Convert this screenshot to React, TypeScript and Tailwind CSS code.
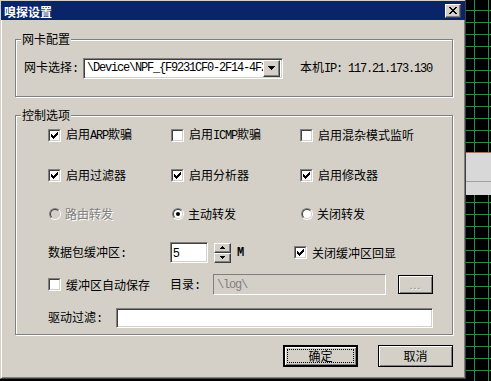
import React from 'react';

const mono = "font-['Liberation_Mono',monospace] text-[12px] tracking-[-1.2px]";
const sunken =
  'border border-t-[#808080] border-l-[#808080] border-b-white border-r-white shadow-[inset_1px_1px_0_#404040,inset_-1px_-1px_0_#d4d0c8]';
const raised =
  'border border-t-white border-l-white border-b-[#404040] border-r-[#404040] shadow-[inset_-1px_-1px_0_#808080]';

function A({ children }: { children: React.ReactNode }) {
  return <span className={mono}>{children}</span>;
}

function Tick() {
  return (
    <svg width="7" height="7" viewBox="0 0 7 7" className="block">
      <path d="M0 2h1v3H0zM1 3h1v3H1zM2 4h1v3H2zM3 3h1v3H3zM4 2h1v3H4zM5 1h1v3H5zM6 0h1v3H6z" fill="#000" />
    </svg>
  );
}

function CheckBox({ checked, label }: { checked?: boolean; label: React.ReactNode }) {
  return (
    <div className="flex items-center h-[20px]">
      <div className="w-[13px] h-[13px] flex-none border border-t-[#808080] border-l-[#808080] border-b-white border-r-white">
        <div className="w-full h-full border border-t-[#404040] border-l-[#404040] border-b-[#d4d0c8] border-r-[#d4d0c8] bg-white flex items-center justify-center">
          {checked && <Tick />}
        </div>
      </div>
      <span className="ml-[5px] whitespace-nowrap">{label}</span>
    </div>
  );
}

function Radio({ checked, disabled, label }: { checked?: boolean; disabled?: boolean; label: string }) {
  return (
    <div className="flex items-center h-[20px] pl-[1px]">
      <div className="w-[12px] h-[12px] flex-none rounded-full border border-t-[#808080] border-l-[#808080] border-b-white border-r-white">
        <div
          className={`w-full h-full rounded-full border border-t-[#404040] border-l-[#404040] border-b-[#d4d0c8] border-r-[#d4d0c8] flex items-center justify-center ${
            disabled ? 'bg-[#d4d0c8]' : 'bg-white'
          }`}
        >
          {checked && <div className="w-[4px] h-[4px] rounded-full bg-black" />}
        </div>
      </div>
      <span className={`ml-[4px] whitespace-nowrap ${disabled ? 'text-[#808080] [text-shadow:1px_1px_0_#fff]' : ''}`}>
        {label}
      </span>
    </div>
  );
}

function Group({ title, className, children }: { title: string; className?: string; children: React.ReactNode }) {
  return (
    <div className={`relative border border-[#808080] shadow-[inset_1px_1px_0_#fff,1px_1px_0_#fff] ${className ?? ''}`}>
      <span className="absolute -top-[8px] left-[5px] px-[1px] bg-[#d4d0c8] leading-[14px]">{title}</span>
      {children}
    </div>
  );
}

function Arrow({ up }: { up?: boolean }) {
  return (
    <svg width="7" height="4" viewBox="0 0 7 4" className="block">
      <path d={up ? 'M3 0h1v1h1v1h1v1h1v1H0V3h1V2h1V1h1z' : 'M0 0h7v1H6v1H5v1H4v1H3V3H2V2H1V1H0z'} fill="#000" />
    </svg>
  );
}

function SmallArrow({ up }: { up?: boolean }) {
  return (
    <svg width="5" height="3" viewBox="0 0 5 3" className="block">
      <path d={up ? 'M2 0h1v1h1v1h1v1H0V2h1V1h1z' : 'M0 0h5v1H4v1H3v1H2V2H1V1H0z'} fill="#000" />
    </svg>
  );
}

function Grid() {
  const h = [];
  for (let y = 10; y < 381; y += 12) h.push(<rect key={'h' + y} x="0" y={y} width="25" height="1" />);
  return (
    <svg className="absolute inset-0" width="25" height="381" viewBox="0 0 25 381">
      <g fill="#2f8a4c">
        {h}
        <rect x="8" y="0" width="1" height="381" />
        <rect x="22" y="0" width="1" height="381" />
      </g>
    </svg>
  );
}

export default function App() {
  return (
    <div className="w-[491px] h-[381px] bg-black flex overflow-hidden font-['Noto_Sans_CJK_SC',sans-serif] text-[12px] leading-[14px] text-black">
      <div className="w-[466px] h-[379px] flex-none flex flex-col bg-[#d4d0c8] border-l border-l-[#d4d0c8] border-r border-b border-r-[#404040] border-b-[#404040] shadow-[inset_1px_0_0_#fff,inset_-1px_-1px_0_#808080]">
        {/* title bar */}
        <div className="h-[20px] flex-none flex items-center justify-between bg-[#0a246a] pl-[3px] pr-[4px] border-t border-t-[#d4d0c8]">
          <span className="text-white font-bold text-[12px] leading-[14px] pt-[2px]">嗅探设置</span>
          <div className={`w-[16px] h-[14px] bg-[#d4d0c8] flex items-center justify-center ${raised}`}>
            <svg width="8" height="7" viewBox="0 0 8 7" className="block">
              <path d="M0 0h2v1h1v1h2V1h1V0h2v1H7v1H6v1H5v1h1v1h1v1h1v1H6V6H5V5H3v1H2v1H0V6h1V5h1V4h1V3H2V2H1V1H0z" fill="#000" />
            </svg>
          </div>
        </div>

        <div className="flex flex-col pl-[14px] pr-[12px]">
          <Group title="网卡配置" className="mt-[19px] h-[58px] flex items-center pl-[8px]">
            <span className="w-[59px] flex-none">
              网卡选择<A>:</A>
            </span>
            <div className={`w-[200px] h-[21px] flex-none flex items-center bg-white pl-[3px] pr-[2px] ${sunken}`}>
              <span className={`flex-1 overflow-hidden whitespace-nowrap ${mono}`}>
                \Device\NPF_{'{'}F9231CF0-2F14-4F2C
              </span>
              <div className={`w-[17px] h-[17px] flex-none bg-[#d4d0c8] flex items-center justify-center ${raised}`}>
                <Arrow />
              </div>
            </div>
            <span className="ml-[17px] whitespace-nowrap">
              本机<A>IP: 117.21.173.130</A>
            </span>
          </Group>

          <Group title="控制选项" className="mt-[18px] h-[220px] flex flex-col pl-[32px] pt-[9px]">
            <div className="grid grid-cols-[123px_129px_1fr]">
              <CheckBox checked label={<>启用<A>ARP</A>欺骗</>} />
              <CheckBox label={<>启用<A>ICMP</A>欺骗</>} />
              <CheckBox label="启用混杂模式监听" />
            </div>
            <div className="grid grid-cols-[123px_129px_1fr] mt-[20px]">
              <CheckBox checked label="启用过滤器" />
              <CheckBox checked label="启用分析器" />
              <CheckBox checked label="启用修改器" />
            </div>
            <div className="grid grid-cols-[123px_129px_1fr] mt-[19px]">
              <Radio disabled label="路由转发" />
              <Radio checked label="主动转发" />
              <Radio label="关闭转发" />
            </div>

            <div className="flex items-center h-[21px] mt-[18px]">
              <span className="w-[122px] flex-none">
                数据包缓冲区<A>:</A>
              </span>
              <div className={`w-[38px] h-[21px] flex-none bg-white flex items-center pl-[2px] font-['Liberation_Sans',sans-serif] text-[12px] ${sunken}`}>
                5
              </div>
              <div className="ml-[6px] w-[17px] h-[20px] flex-none flex flex-col">
                <div className={`h-[10px] bg-[#d4d0c8] flex items-center justify-center ${raised}`}>
                  <SmallArrow up />
                </div>
                <div className={`h-[10px] bg-[#d4d0c8] flex items-center justify-center ${raised}`}>
                  <SmallArrow />
                </div>
              </div>
              <span className={`ml-[6px] w-[57px] flex-none font-bold ${mono}`}>M</span>
              <CheckBox checked label="关闭缓冲区回显" />
            </div>

            <div className="flex items-center h-[21px] mt-[11px]">
              <div className="w-[122px] flex-none">
                <CheckBox label="缓冲区自动保存" />
              </div>
              <span className="w-[43px] flex-none">
                目录<A>:</A>
              </span>
              <div className={`w-[173px] h-[21px] flex-none flex items-center pl-[3px] text-[#808080] ${mono} ${sunken} shadow-none border-t-[#808080] border-l-[#808080]`}>
                \log\
              </div>
              <div className="ml-[12px] w-[35px] h-[19px] flex-none border border-black shadow-[inset_1px_1px_0_#fff,inset_-1px_-1px_0_#808080] flex items-center justify-center text-[#808080] [text-shadow:1px_1px_0_#fff] text-[10px] leading-[10px] tracking-[1px]">
                ...
              </div>
            </div>

            <div className="flex items-center h-[20px] mt-[13px]">
              <span className="w-[68px] flex-none">
                驱动过滤<A>:</A>
              </span>
              <div className={`w-[317px] h-[20px] flex-none bg-white ${sunken}`} />
            </div>
          </Group>

          <div className="flex justify-end gap-[20px] mt-[10px] pr-[0px]">
            <div className="w-[75px] h-[22px] border-2 border-black shadow-[inset_1px_1px_0_#fff,inset_-1px_-1px_0_#808080] p-[2px] flex">
              <div className="flex-1 border border-dotted border-black flex items-center justify-center">确定</div>
            </div>
            <div className="w-[75px] h-[22px] border border-black shadow-[inset_1px_1px_0_#fff,inset_-1px_-1px_0_#808080] flex items-center justify-center">
              取消
            </div>
          </div>
        </div>
      </div>

      <div className="flex-1 relative flex flex-col">
        <Grid />
        <div className="relative mt-[152px] border-t border-t-[#a0705a] bg-[#d8d8d8] h-[30px] border-b border-b-[#a0a0a0]" />
        <div className="relative bg-[#d8d8d8] h-[13px]" />
      </div>
    </div>
  );
}
